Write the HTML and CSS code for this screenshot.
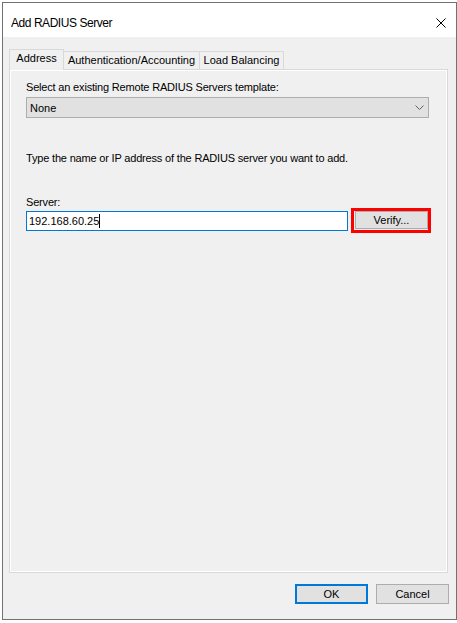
FILE: index.html
```html
<!DOCTYPE html>
<html lang="en">
<head>
    <meta charset="UTF-8">
    <meta name="viewport" content="width=device-width, initial-scale=1.0">
    <title>Add RADIUS Server</title>
    <link rel="stylesheet" href="styles.css">
</head>
<body>
    <div class="window">
        <div class="titlebar">
            <span class="title">Add RADIUS Server</span>
            <span class="close" title="Close">
                <svg width="10" height="10" viewBox="0 0 10 10">
                    <path d="M0.5 0.5 L9.5 9.5 M9.5 0.5 L0.5 9.5" stroke="#000" stroke-width="1" fill="none"/>
                </svg>
            </span>
        </div>
        <div class="client">
            <div class="tabs">
                <div class="tab active">Address</div>
                <div class="tab tab-auth">Authentication/Accounting</div>
                <div class="tab tab-lb">Load Balancing</div>
            </div>
            <div class="tab-page">
                <div class="label">Select an existing Remote RADIUS Servers template:</div>
                <div class="combo">
                    <span>None</span>
                    <svg class="chevron" width="9" height="5" viewBox="0 0 9 5">
                        <path d="M0.5 0.5 L4.5 4.5 L8.5 0.5" stroke="#606060" stroke-width="1" fill="none"/>
                    </svg>
                </div>
                <div class="label hint">Type the name or IP address of the RADIUS server you want to add.</div>
                <div class="label server-label">Server:</div>
                <div class="server-row">
                    <div class="textbox">192.168.60.25<span class="caret"></span></div>
                    <div class="highlight">
                        <button class="btn verify">Verify...</button>
                    </div>
                </div>
            </div>
            <div class="footer">
                <button class="btn default">OK</button>
                <button class="btn">Cancel</button>
            </div>
        </div>
    </div>
</body>
</html>
```

FILE: styles.css
```css
body {
    margin: 0;
    padding: 0;
    background-color: #fff;
    font-family: "Liberation Sans", Arial, sans-serif;
    font-size: 11px;
    color: #000;
}
.window {
    margin: 2px 0 0 2px;
    width: 455px;
    height: 618px;
    box-sizing: border-box;
    border: 1px solid #717171;
    display: flex;
    flex-direction: column;
}
.titlebar {
    height: 34px;
    box-sizing: border-box;
    padding: 5px 10px 0 8px;
    background-color: #fff;
    display: flex;
    justify-content: space-between;
    align-items: center;
}
.title {
    font-size: 12px;
    letter-spacing: -0.45px;
}
.close {
    display: flex;
    width: 10px;
    height: 10px;
}
.client {
    flex: 1;
    background-color: #f0f0f0;
    padding: 12px 8px 0 6px;
    display: flex;
    flex-direction: column;
}
.tabs {
    display: flex;
    align-items: flex-end;
    height: 20px;
}
.tab {
    box-sizing: border-box;
    height: 18px;
    border-top: 1px solid #d9d9d9;
    border-right: 1px solid #d9d9d9;
    background-color: #f0f0f0;
    text-align: center;
    line-height: 17px;
}
.tab.active {
    position: relative;
    z-index: 1;
    width: 55px;
    height: 21px;
    margin-bottom: -1px;
    border-left: 1px solid #d9d9d9;
    line-height: 16px;
}
.tab-auth {
    width: 136px;
}
.tab-lb {
    width: 84px;
}
.tab-page {
    height: 504px;
    box-sizing: border-box;
    border: 1px solid #d9d9d9;
    box-shadow: inset 1px 1px 0 #fff, inset -1px -1px 0 #fff;
    padding: 11px 18px 0 16px;
}
.label {
    line-height: 13px;
    letter-spacing: -0.18px;
}
.combo {
    margin-top: 3px;
    height: 21px;
    box-sizing: border-box;
    border: 1px solid #adadad;
    background-color: #e1e1e1;
    padding: 0 4px 0 3px;
    display: flex;
    justify-content: space-between;
    align-items: center;
}
.hint {
    margin-top: 34px;
}
.server-label {
    margin-top: 31px;
}
.server-row {
    margin-top: -1px;
    display: flex;
    align-items: center;
    gap: 3px;
    width: 405px;
}
.textbox {
    width: 322px;
    height: 20px;
    box-sizing: border-box;
    border: 1px solid #0078d7;
    background-color: #fff;
    padding: 0 0 0 2px;
    display: flex;
    align-items: center;
}
.caret {
    display: inline-block;
    width: 1px;
    height: 14px;
    background-color: #000;
}
.highlight {
    border: 3px solid #ff0000;
    padding: 0 0 1px 1px;
    display: flex;
}
.btn {
    width: 73px;
    height: 20px;
    box-sizing: border-box;
    border: 1px solid #adadad;
    background-color: #e1e1e1;
    font-family: inherit;
    font-size: 11px;
    color: #000;
    padding: 0;
    margin: 0;
}
.btn.verify {
    height: 18px;
}
.btn.default {
    border: 2px solid #0078d7;
}
.footer {
    margin-right: -1px;
    padding-top: 11px;
    display: flex;
    justify-content: flex-end;
    gap: 8px;
}
```
